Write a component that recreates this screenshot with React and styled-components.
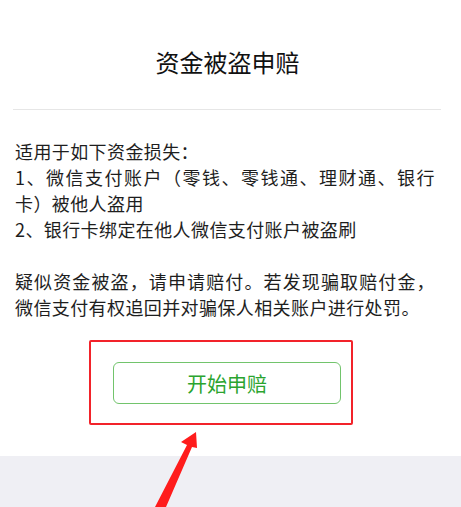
import React from 'react';
import styled, { createGlobalStyle } from 'styled-components';

const GlobalStyle = createGlobalStyle`
  html, body {
    margin: 0;
    padding: 0;
    background: #ffffff;
  }
  body {
    font-family: "Noto Sans CJK SC", "Noto Sans", sans-serif;
  }
`;

const Page = styled.div`
  position: relative;
  min-height: 100vh;
  display: flex;
  flex-direction: column;
  background: #ffffff;
  overflow: hidden;
`;

const Header = styled.header`
  padding: 48px 0 33px;
  text-align: center;
`;

const Title = styled.h1`
  margin: 0;
  font-size: 24px;
  line-height: 28px;
  font-weight: 400;
  color: #111111;
  padding-right: 6px;
`;

const Divider = styled.hr`
  margin: 0 20px 0 13px;
  border: none;
  height: 1px;
  background: #e6e6e6;
`;

const Content = styled.section`
  padding: 28px 0 0 15px;
  width: 420px;
`;

const Paragraph = styled.p`
  margin: 0 0 ${({ gap }) => gap || 0}px;
  font-size: 18px;
  line-height: 26px;
  letter-spacing: 0.4px;
  color: #1e1e1e;
  text-align: justify;
  text-spacing-trim: space-all;
`;

const Highlight = styled.div`
  align-self: flex-start;
  margin: 20px 0 0 89px;
  padding: 20px 10px 19px 22px;
  border: 2px solid #f2232a;
  border-radius: 2px;
`;

const ClaimButton = styled.button`
  display: block;
  width: 228px;
  height: 42px;
  padding: 0;
  background: #ffffff;
  border: 1.5px solid #72c46c;
  border-radius: 6px;
  font-family: inherit;
  font-size: 20px;
  color: #2ba42f;
  cursor: pointer;
`;

const Footer = styled.div`
  flex: 1;
  margin-top: 31px;
  background: #efeff4;
`;

const Arrow = styled.svg`
  position: absolute;
  left: 0;
  top: 0;
  width: 461px;
  height: 507px;
  pointer-events: none;
`;

const App = () => (
  <>
    <GlobalStyle />
    <Page>
      <Header>
        <Title>资金被盗申赔</Title>
      </Header>
      <Divider />
      <Content>
        <Paragraph>适用于如下资金损失：</Paragraph>
        <Paragraph>1、微信支付账户（零钱、零钱通、理财通、银行卡）被他人盗用</Paragraph>
        <Paragraph gap={26}>2、银行卡绑定在他人微信支付账户被盗刷</Paragraph>
        <Paragraph>
          疑似资金被盗，请申请赔付。若发现骗取赔付金，微信支付有权追回并对骗保人相关账户进行处罚。
        </Paragraph>
      </Content>
      <Highlight>
        <ClaimButton>开始申赔</ClaimButton>
      </Highlight>
      <Footer />
      <Arrow viewBox="0 0 461 507">
        <polygon
          fill="#ff1c1c"
          points="155,507 187,445 181,442 196,432 197,448 192,447 166,507"
        />
      </Arrow>
    </Page>
  </>
);

export default App;
